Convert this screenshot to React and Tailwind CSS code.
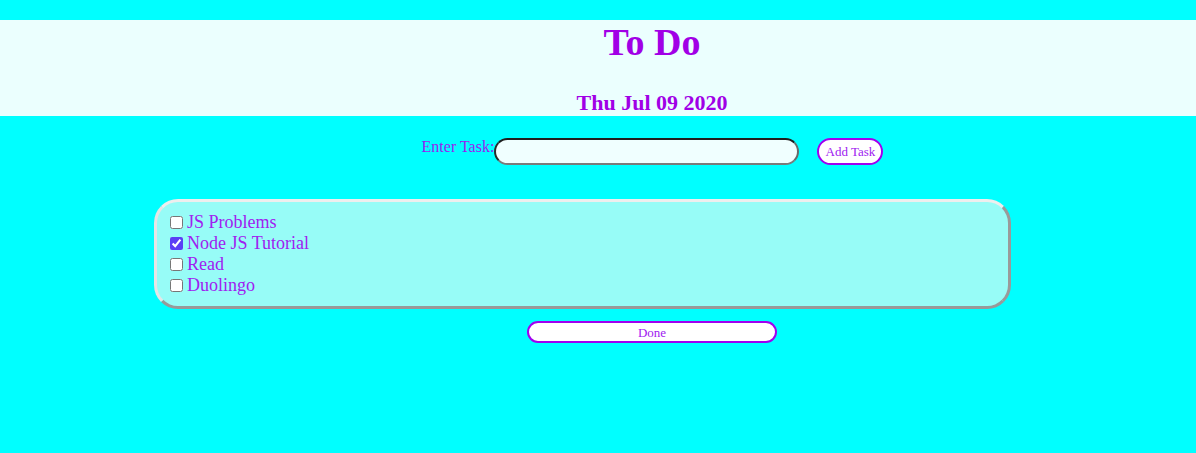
import React, { useState } from 'react';

const initialTasks = [
  { id: 1, text: 'JS Problems', done: false },
  { id: 2, text: 'Node JS Tutorial', done: true },
  { id: 3, text: 'Read', done: false },
  { id: 4, text: 'Duolingo', done: false },
];

const App = () => {
  const [tasks, setTasks] = useState(initialTasks);
  const [task, setTask] = useState('');

  const toggle = (id) => {
    setTasks(tasks.map((t) => (t.id === id ? { ...t, done: !t.done } : t)));
  };

  const addTask = () => {
    if (!task.trim()) return;
    setTasks([...tasks, { id: Date.now(), text: task, done: false }]);
    setTask('');
  };

  const clearDone = () => {
    setTasks(tasks.filter((t) => !t.done));
  };

  return (
    <div className="min-h-screen bg-[#00ffff] pt-5 font-['Liberation_Serif',serif] text-[#a020f0]">
      {/* Header */}
      <header className="h-[96px] bg-[#ebfffe] pl-[108px] text-center">
        <h1 className="text-[38px] font-bold leading-[44px] text-[#a100e6]">To Do</h1>
        <h2 className="mt-[26px] text-[22px] font-bold leading-[25px] text-[#a100e6]">Thu Jul 09 2020</h2>
      </header>

      {/* Input row */}
      <div className="mt-[22px] flex items-start justify-center pl-[109px]">
        <span className="text-[16px] leading-[18px] text-[#9a1ef0]">Enter Task:</span>
        <input
          value={task}
          onChange={(e) => setTask(e.target.value)}
          className="h-[27px] w-[305px] rounded-full border-2 border-t-[#1f1f1f] border-l-[#2a2a2a] border-b-[#7a7a7a] border-r-[#6a6a6a] bg-[#f0ffff] px-3 text-[14px] outline-none"
        />
        <button
          onClick={addTask}
          className="ml-[18px] h-[27px] w-[66px] rounded-full border-2 border-[#a000f0] bg-white text-[13px] text-[#a020f0]"
        >
          Add Task
        </button>
      </div>

      {/* Task list */}
      <div className="ml-[154px] mt-[34px] h-[110px] w-[857px] rounded-[24px] border-[3px] border-t-[#eeeeee] border-l-[#e6e6e6] border-b-[#999999] border-r-[#9a9a9a] bg-[#97fcf7] pl-[9px] pt-[10px]">
        {tasks.map((t) => (
          <label key={t.id} className="flex h-[21px] items-center text-[18px] leading-[21px]">
            <input
              type="checkbox"
              checked={t.done}
              onChange={() => toggle(t.id)}
              className="ml-[4px] mr-[4px] h-[13px] w-[13px] accent-[#5b3ff5]"
            />
            {t.text}
          </label>
        ))}
      </div>

      {/* Done */}
      <div className="mt-[12px] flex justify-center pl-[108px]">
        <button
          onClick={clearDone}
          className="h-[22px] w-[250px] rounded-full border-2 border-[#a000f0] bg-white text-[13px] text-[#a020f0]"
        >
          Done
        </button>
      </div>
    </div>
  );
};

export default App;
